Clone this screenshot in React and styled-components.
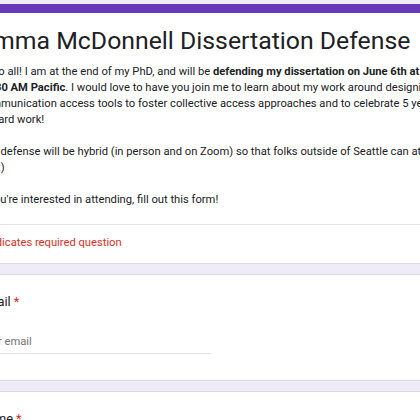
import React from "react";
import styled, { createGlobalStyle } from "styled-components";

const Global = createGlobalStyle`
  html, body { margin: 0; padding: 0; background: #f0ebf8; }
  body { font-family: Roboto, "Liberation Sans", sans-serif; color: #202124; overflow: hidden; }
`;

const Column = styled.main`
  margin-left: -41px;
  width: 512px;
  padding-top: 4px;
  display: flex;
  flex-direction: column;
  gap: 10px;
`;

const Card = styled.section`
  background: #fff;
  border: 1px solid #dadce0;
  border-radius: 7px;
  ${(p) => p.$accent && `border-top: 9px solid #673ab7;`}
`;

const HeaderBody = styled.div`
  padding: 13px 19px 16px;
  border-bottom: 1px solid #e4e4e4;
`;

const Title = styled.h1`
  margin: 0 0 8px;
  font-family: Roboto, "Open Sans", sans-serif;
  font-weight: 400;
  font-size: 24.8px;
  line-height: 30px;
  color: #202124;
  white-space: nowrap;
`;

const Desc = styled.p`
  margin: 0;
  max-width: 465px;
  font-size: 11.2px;
  line-height: 16px;
  color: #202124;
  white-space: pre-wrap;
`;

const Required = styled.div`
  padding: 10px 19px 12px;
  font-size: 11.2px;
  line-height: 16px;
  color: #d93025;
`;

const Question = styled.div`
  padding: 17px 19px 26px;
  display: flex;
  flex-direction: column;
  gap: 21px;
`;

const Label = styled.div`
  font-size: 12.8px;
  line-height: 20px;
  color: #202124;
  span { color: #d93025; margin-left: 3px; }
`;

const Input = styled.div`
  width: 232px;
  height: 21px;
  box-sizing: border-box;
  border-bottom: 1px solid #e3e3e3;
  font-size: 11.2px;
  line-height: 18px;
  color: #70757a;
`;

export default function App() {
  return (
    <>
      <Global />
      <Column>
        <Card $accent>
          <HeaderBody>
            <Title>Emma McDonnell Dissertation Defense</Title>
            <Desc>
              Hello all! I am at the end of my PhD, and will be <b>defending my dissertation on June 6th at 10:30 AM Pacific</b>. I would love to have you join me to learn about my work around designing communication access tools to foster collective access approaches and to celebrate 5 years of hard work!
              {"\n\n"}The defense will be hybrid (in person and on Zoom) so that folks outside of Seattle can attend too :)
              {"\n\n"}If you're interested in attending, fill out this form!
            </Desc>
          </HeaderBody>
          <Required>* Indicates required question</Required>
        </Card>
        <Card>
          <Question>
            <Label>Email<span>*</span></Label>
            <Input>Your email</Input>
          </Question>
        </Card>
        <Card>
          <Question>
            <Label>Name<span>*</span></Label>
            <Input>Your answer</Input>
          </Question>
        </Card>
      </Column>
    </>
  );
}
